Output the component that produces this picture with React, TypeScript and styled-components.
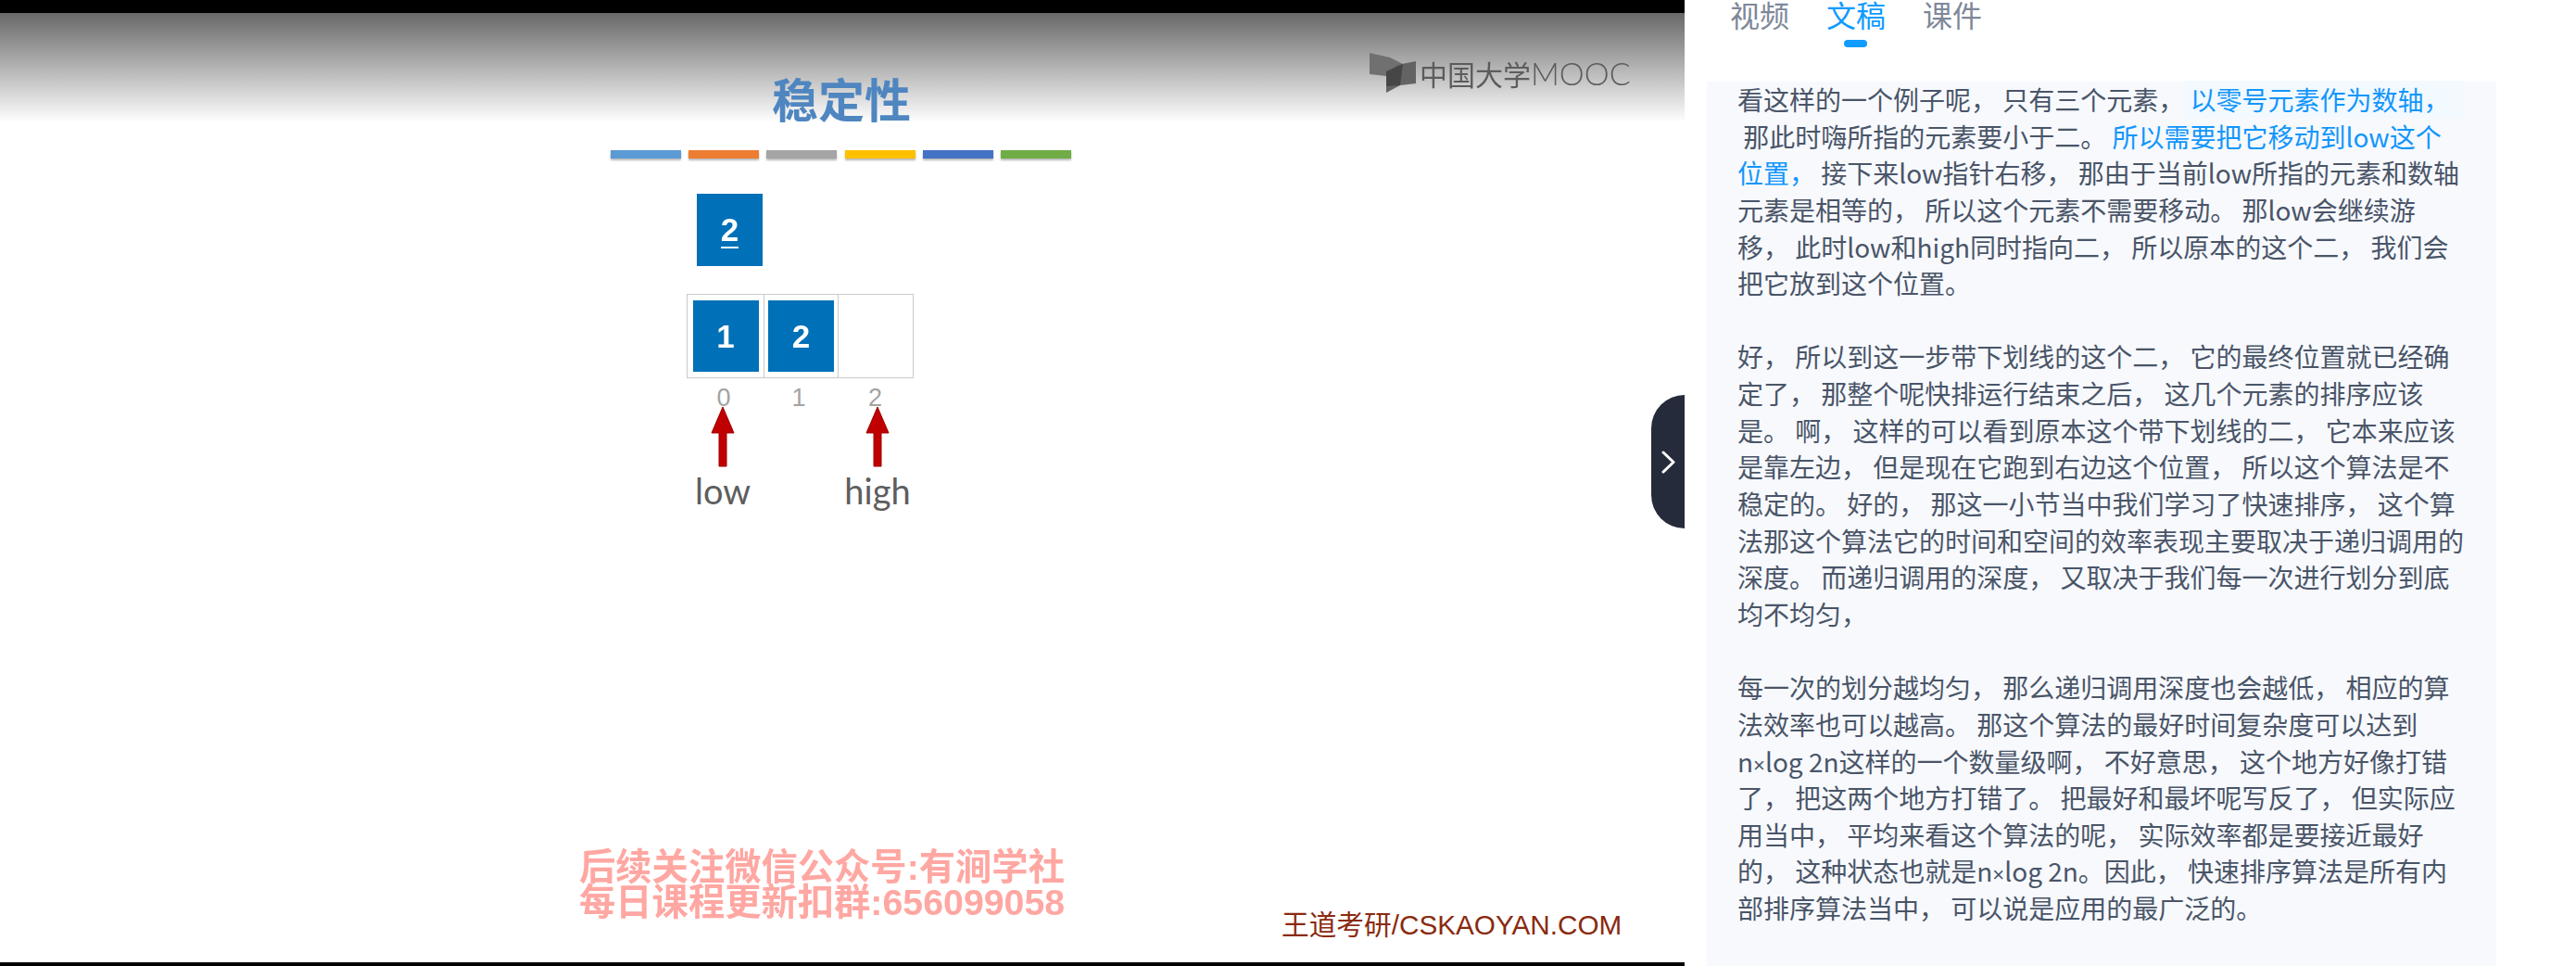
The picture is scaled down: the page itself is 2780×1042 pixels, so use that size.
import React from "react"
import styled, { createGlobalStyle } from "styled-components"

const GlobalStyle = createGlobalStyle`
  html, body {
    margin: 0;
    padding: 0;
    background: #fff;
  }
`

const Page = styled.div`
  width: 2780px;
  height: 1042px;
  display: flex;
  overflow: hidden;
  background: #fff;
  font-family: "Noto Sans CJK SC", "Noto Sans", sans-serif;
`

const Video = styled.div`
  position: relative;
  width: 1818px;
  height: 1042px;
  flex: none;
  background: #fff;
  border-top: 14px solid #000;
  border-bottom: 4px solid #000;
  box-sizing: border-box;
`

const TopShade = styled.div`
  height: 118px;
  background: linear-gradient(#686868, #ffffff);
`

const Logo = styled.div`
  position: absolute;
  left: 1478px;
  top: 43px;
  display: flex;
  align-items: center;
  gap: 4px;
  height: 43px;
  color: #5c5c5c;
  font-size: 30px;
  line-height: 43px;
  filter: blur(0.4px);
`

const LogoLatin = styled.span`
  font-family: "Lato", sans-serif;
  font-weight: 300;
  font-size: 34px;
`

const Title = styled.div`
  position: absolute;
  left: 833px;
  top: 59px;
  color: #4f86c0;
  font-size: 50px;
  line-height: 64px;
  font-weight: 700;
  filter: blur(0.6px);
`

const ColorBars = styled.div`
  position: absolute;
  left: 659px;
  top: 148px;
  width: 497px;
  display: flex;
  justify-content: space-between;
`

const ColorBar = styled.div<{ $color: string }>`
  width: 76px;
  height: 9px;
  background: ${p => p.$color};
  box-shadow: 0 2px 2px rgba(0, 0, 0, 0.28);
`

const Pivot = styled.div`
  position: absolute;
  left: 752px;
  top: 195px;
  width: 71px;
  height: 78px;
  background: #0070b8;
  color: #fff;
  display: flex;
  align-items: center;
  justify-content: center;
  font-family: "Liberation Sans", Arial, sans-serif;
  font-size: 35px;
  font-weight: 700;
  filter: blur(0.3px);
`

const Underlined = styled.span`
  border-bottom: 2px solid #fff;
  line-height: 32px;
  padding-bottom: 2px;
  margin-top: 4px;
`

const ArrayRow = styled.div`
  position: absolute;
  left: 741px;
  top: 303px;
  width: 245px;
  height: 91px;
  display: grid;
  grid-template-columns: 83px 80px 82px;
  box-sizing: border-box;
  border: 1px solid #c8cbcf;
`

const ArrayCell = styled.div`
  display: flex;
  align-items: center;
  justify-content: center;
  border-right: 1px solid #c8cbcf;

  &:last-child {
    border-right: none;
  }
`

const Block = styled.div`
  width: 71px;
  height: 77px;
  background: #0070b8;
  color: #fff;
  display: flex;
  align-items: center;
  justify-content: center;
  font-family: "Liberation Sans", Arial, sans-serif;
  font-weight: 700;
  font-size: 35px;
  filter: blur(0.3px);
`

const IndexRow = styled.div`
  position: absolute;
  left: 741px;
  top: 401px;
  width: 245px;
  display: grid;
  grid-template-columns: 80px 82px 83px;
  color: #a3a3a3;
  font-family: "Liberation Sans", Arial, sans-serif;
  font-size: 27px;
  line-height: 28px;
  text-align: center;
`

const Pointer = styled.div<{ $left: number }>`
  position: absolute;
  left: ${p => p.$left}px;
  top: 424px;
  width: 100px;
  display: flex;
  flex-direction: column;
  align-items: center;
`

const PointerLabel = styled.div`
  margin-top: 2px;
  color: #5e5e5e;
  font-family: "Lato", sans-serif;
  font-weight: 400;
  font-size: 38px;
  line-height: 46px;
`

const Notice = styled.div`
  position: absolute;
  left: 625px;
  top: 902px;
  color: #ffa7a2;
  font-family: "Liberation Sans", "Noto Sans CJK SC", sans-serif;
  font-size: 39.3px;
  line-height: 38px;
  font-weight: 700;
  white-space: nowrap;
  filter: blur(0.5px);
`

const Credit = styled.div`
  position: absolute;
  left: 1383px;
  top: 964px;
  color: #8a2a10;
  font-family: "Liberation Sans", "Noto Sans CJK SC", sans-serif;
  font-size: 29.7px;
  line-height: 40px;
  white-space: nowrap;
`

const CollapseHandle = styled.div`
  position: absolute;
  right: 0;
  top: 412px;
  width: 36px;
  height: 144px;
  padding-left: 2px;
  box-sizing: border-box;
  border-radius: 36px 0 0 36px;
  background: #252b3a;
  display: flex;
  align-items: center;
  justify-content: center;
`

const Side = styled.div`
  flex: 1;
  min-width: 0;
  display: flex;
  flex-direction: column;
`

const Tabs = styled.div`
  height: 88px;
  flex: none;
  padding-left: 49px;
  display: flex;
  gap: 42px;
  box-sizing: border-box;
`

const Tab = styled.div<{ $active?: boolean }>`
  position: relative;
  color: ${p => (p.$active ? "#0f9bff" : "#7e8899")};
  font-size: 32px;
  line-height: 30px;
  height: 32px;
  width: 62px;
  white-space: nowrap;

  ${p =>
    p.$active &&
    `
    &::after {
      content: "";
      position: absolute;
      left: 19px;
      top: 43px;
      width: 25px;
      height: 8px;
      border-radius: 4px;
      background: #0f9bff;
    }
  `}
`

const Transcript = styled.div`
  margin-left: 24px;
  width: 852px;
  flex: 1;
  box-sizing: border-box;
  padding: 0 0 0 33px;
  background: #f7f9fd;
  color: #4a5568;
  font-size: 28px;
  line-height: 39.65px;
`

const Paragraph = styled.div`
  margin-bottom: 39.65px;
`

const Line = styled.div`
  white-space: pre;
  height: 39.65px;
`

const Spoken = styled.span<{ $current?: boolean }>`
  color: #1296fb;
  ${p => p.$current && "background: #f2f9ff; padding-right: 14px;"}
`

const Times = styled.span`
  font-family: "Liberation Sans", sans-serif;
  font-size: 22px;
`

const barColors = ["#5b9bd5", "#ed7d31", "#a5a5a5", "#ffc000", "#4472c4", "#70ad47"]

const Arrow = () => (
  <svg width="26" height="66" viewBox="0 0 26 66">
    <path
      d="M13 1 L25 29 H17 V65 H9 V29 H1 Z"
      fill="#c00000"
      stroke="#9c0000"
      strokeWidth="1"
    />
  </svg>
)

const LogoMark = () => (
  <svg width="50" height="43" viewBox="0 0 50 43">
    <path d="M0 0 L22 5 L36 12 L18 28 V25 L0 23 Z" fill="#707070" />
    <path d="M18 22 L30 13 L50 9 V33 L33 35 L18 43 Z" fill="#636363" />
    <path d="M18 20 L36 12 L33 35 L18 36 Z" fill="#464646" />
  </svg>
)

const Chevron = () => (
  <svg width="16" height="25" viewBox="0 0 16 25">
    <path
      d="M2 2 L13 12.5 L2 23"
      fill="none"
      stroke="#fff"
      strokeWidth="3"
      strokeLinecap="round"
      strokeLinejoin="round"
    />
  </svg>
)

const App = () => (
  <Page>
    <GlobalStyle />
    <Video>
      <TopShade />
      <Logo>
        <LogoMark />
        <span>
          中国大学<LogoLatin>MOOC</LogoLatin>
        </span>
      </Logo>
      <Title>稳定性</Title>
      <ColorBars>
        {barColors.map(c => (
          <ColorBar key={c} $color={c} />
        ))}
      </ColorBars>
      <Pivot>
        <Underlined>2</Underlined>
      </Pivot>
      <ArrayRow>
        <ArrayCell>
          <Block>1</Block>
        </ArrayCell>
        <ArrayCell>
          <Block>2</Block>
        </ArrayCell>
        <ArrayCell />
      </ArrayRow>
      <IndexRow>
        <span>0</span>
        <span>1</span>
        <span>2</span>
      </IndexRow>
      <Pointer $left={730}>
        <Arrow />
        <PointerLabel>low</PointerLabel>
      </Pointer>
      <Pointer $left={897}>
        <Arrow />
        <PointerLabel>high</PointerLabel>
      </Pointer>
      <Notice>
        后续关注微信公众号:有涧学社
        <br />
        每日课程更新扣群:656099058
      </Notice>
      <Credit>王道考研/CSKAOYAN.COM</Credit>
      <CollapseHandle>
        <Chevron />
      </CollapseHandle>
    </Video>
    <Side>
      <Tabs>
        <Tab>视频</Tab>
        <Tab $active>文稿</Tab>
        <Tab>课件</Tab>
      </Tabs>
      <Transcript>
        <Paragraph>
          <Line>
            看这样的一个例子呢， 只有三个元素，<Spoken $current> 以零号元素作为数轴，</Spoken>
          </Line>
          <Line>
            {" "}那此时嗨所指的元素要小于二。 <Spoken>所以需要把它移动到low这个</Spoken>
          </Line>
          <Line>
            <Spoken>位置，</Spoken> 接下来low指针右移， 那由于当前low所指的元素和数轴
          </Line>
          <Line>元素是相等的， 所以这个元素不需要移动。 那low会继续游</Line>
          <Line>移， 此时low和high同时指向二， 所以原本的这个二， 我们会</Line>
          <Line>把它放到这个位置。</Line>
        </Paragraph>
        <Paragraph>
          <Line>好， 所以到这一步带下划线的这个二， 它的最终位置就已经确</Line>
          <Line>定了， 那整个呢快排运行结束之后， 这几个元素的排序应该</Line>
          <Line>是。 啊， 这样的可以看到原本这个带下划线的二， 它本来应该</Line>
          <Line>是靠左边， 但是现在它跑到右边这个位置， 所以这个算法是不</Line>
          <Line>稳定的。 好的， 那这一小节当中我们学习了快速排序， 这个算</Line>
          <Line>法那这个算法它的时间和空间的效率表现主要取决于递归调用的</Line>
          <Line>深度。 而递归调用的深度， 又取决于我们每一次进行划分到底</Line>
          <Line>均不均匀，</Line>
        </Paragraph>
        <Paragraph>
          <Line>每一次的划分越均匀， 那么递归调用深度也会越低， 相应的算</Line>
          <Line>法效率也可以越高。 那这个算法的最好时间复杂度可以达到</Line>
          <Line>
            n<Times>×</Times>log 2n这样的一个数量级啊， 不好意思， 这个地方好像打错
          </Line>
          <Line>了， 把这两个地方打错了。 把最好和最坏呢写反了， 但实际应</Line>
          <Line>用当中， 平均来看这个算法的呢， 实际效率都是要接近最好</Line>
          <Line>
            的， 这种状态也就是n<Times>×</Times>log 2n。因此， 快速排序算法是所有内
          </Line>
          <Line>部排序算法当中， 可以说是应用的最广泛的。</Line>
        </Paragraph>
      </Transcript>
    </Side>
  </Page>
)

export default App
